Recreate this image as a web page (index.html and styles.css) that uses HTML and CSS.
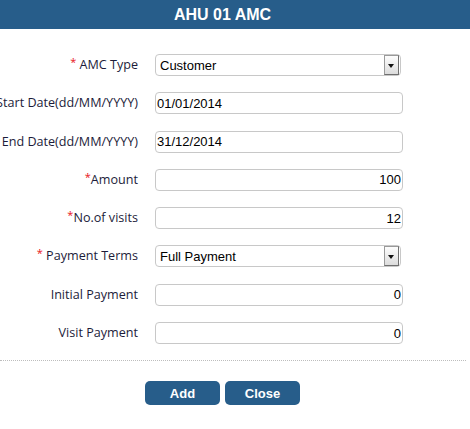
FILE: index.html
```html
<!DOCTYPE html>
<html lang="en">
  <head>
    <meta charset="UTF-8" />
    <title>AHU 01 AMC</title>
    <link rel="stylesheet" href="styles.css">
  </head>
  <body>
    <div class="dialog">
      <!-- Title bar -->
      <div class="titlebar">
        <h1>AHU 01 AMC</h1>
      </div>

      <!-- AMC form -->
      <form class="amc-form">
        <div class="row">
          <label class="field-label"><span><span class="req">*</span> AMC Type</span></label>
          <div class="select-wrap">
            <select class="field">
              <option>Customer</option>
            </select>
            <span class="arrow"></span>
          </div>
        </div>
        <div class="row">
          <label class="field-label"><span>Start Date(dd/MM/YYYY)</span></label>
          <input class="field" type="text" value="01/01/2014" />
        </div>
        <div class="row">
          <label class="field-label"><span>End Date(dd/MM/YYYY)</span></label>
          <input class="field" type="text" value="31/12/2014" />
        </div>
        <div class="row">
          <label class="field-label"><span><span class="req">*</span>Amount</span></label>
          <input class="field num" type="text" value="100" />
        </div>
        <div class="row">
          <label class="field-label"><span><span class="req">*</span>No.of visits</span></label>
          <input class="field num" type="text" value="12" />
        </div>
        <div class="row">
          <label class="field-label"><span><span class="req">*</span> Payment Terms</span></label>
          <div class="select-wrap">
            <select class="field">
              <option>Full Payment</option>
            </select>
            <span class="arrow"></span>
          </div>
        </div>
        <div class="row">
          <label class="field-label"><span>Initial Payment</span></label>
          <input class="field num" type="text" value="0" />
        </div>
        <div class="row">
          <label class="field-label"><span>Visit Payment</span></label>
          <input class="field num" type="text" value="0" />
        </div>
      </form>

      <div class="divider"></div>

      <div class="actions">
        <button type="button" class="btn">Add</button>
        <button type="button" class="btn">Close</button>
      </div>
    </div>
  </body>
</html>
```

FILE: styles.css
```css
body {
  margin: 0;
  background: #fff;
  font-family: "Liberation Sans", Arial, sans-serif;
  overflow: hidden;
}

.titlebar {
  background: #275d8a;
  height: 29px;
  display: flex;
  align-items: center;
}

.titlebar h1 {
  width: 445px;
  margin: 0;
  text-align: center;
  color: #fff;
  font-size: 16px;
  font-weight: bold;
}

.amc-form {
  padding-top: 25px;
  display: flex;
  flex-direction: column;
  gap: 16.3px;
}

.row {
  display: flex;
  align-items: center;
  height: 22px;
}

.field-label {
  width: 138px;
  margin-right: 17px;
  display: flex;
  justify-content: flex-end;
  font-family: "Open Sans", "Liberation Sans", sans-serif;
  font-size: 12.6px;
  line-height: 16px;
  color: #1c1c3a;
  white-space: nowrap;
}

.req {
  position: relative;
  top: -3px;
  color: #e8141a;
  font-size: 11px;
}

.field {
  box-sizing: border-box;
  width: 248px;
  height: 22px;
  margin: 0;
  padding: 0 1px;
  border: 1px solid #c8c8c8;
  border-radius: 4px;
  background: #fff;
  font-family: "Liberation Sans", Arial, sans-serif;
  font-size: 13px;
  color: #000;
  outline: none;
}

.num {
  text-align: right;
}

.select-wrap {
  position: relative;
}

.select-wrap .field {
  width: 246px;
  padding-left: 4px;
  appearance: none;
  -webkit-appearance: none;
}

.arrow {
  position: absolute;
  top: 1px;
  right: 2px;
  width: 15px;
  height: 20px;
  box-sizing: border-box;
  border: 1px solid #9a9a9a;
  border-right-color: #6f6f6f;
  border-bottom-color: #6f6f6f;
  background: linear-gradient(#fdfdfd, #dcdcdc);
  pointer-events: none;
}

.arrow::after {
  content: "";
  position: absolute;
  left: 3px;
  top: 8px;
  border-left: 3.5px solid transparent;
  border-right: 3.5px solid transparent;
  border-top: 4px solid #111;
}

.divider {
  margin: 16px 4px 0 0;
  border-top: 1px dotted #bdbdbd;
}

.actions {
  width: 445px;
  padding-top: 20px;
  display: flex;
  justify-content: center;
  gap: 5px;
}

.btn {
  width: 75px;
  height: 24px;
  padding: 0;
  border: none;
  border-radius: 5px;
  background: #275d8a;
  color: #fff;
  font-family: "Liberation Sans", Arial, sans-serif;
  font-size: 13px;
  font-weight: bold;
  cursor: pointer;
}
```
